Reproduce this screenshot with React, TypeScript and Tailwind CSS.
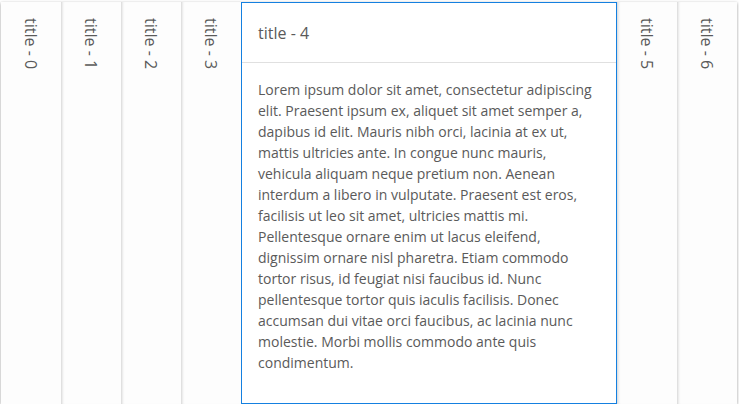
const lorem =
  "Lorem ipsum dolor sit amet, consectetur adipiscing elit. Praesent ipsum ex, aliquet sit amet semper a, dapibus id elit. Mauris nibh orci, lacinia at ex ut, mattis ultricies ante. In congue nunc mauris, vehicula aliquam neque pretium non. Aenean interdum a libero in vulputate. Praesent est eros, facilisis ut leo sit amet, ultricies mattis mi. Pellentesque ornare enim ut lacus eleifend, dignissim ornare nisl pharetra. Etiam commodo tortor risus, id feugiat nisi faucibus id. Nunc pellentesque tortor quis iaculis facilisis. Donec accumsan dui vitae orci faucibus, ac lacinia nunc molestie. Morbi mollis commodo ante quis condimentum.";

const panels = [0, 1, 2, 3, 4, 5, 6];
const active = 4;

export default function App() {
  return (
    <div
      className="mt-[2px] ml-px flex h-[402px] w-[736px] bg-white text-[#5a5a5a] shadow-[0_1px_3px_rgba(0,0,0,0.4)]"
      style={{ fontFamily: '"Open Sans", sans-serif' }}
    >
      {panels.map((i) =>
        i === active ? (
          <div
            key={i}
            className="flex min-w-0 flex-1 flex-col border border-[#1580e0] bg-white"
          >
            <div className="flex h-[60px] shrink-0 items-center border-b border-[#e0e0e0] px-4 text-base">
              title - {i}
            </div>
            <div className="px-4 pt-4 text-sm leading-[21px]">{lorem}</div>
          </div>
        ) : (
          <div
            key={i}
            className="flex w-[60px] shrink-0 justify-center bg-[#fdfdfd] pt-4 shadow-[inset_3px_0_3px_-2px_rgba(0,0,0,0.18)] first:shadow-none"
          >
            <span className="text-base leading-6 [writing-mode:vertical-rl]">
              title - {i}
            </span>
          </div>
        )
      )}
    </div>
  );
}
